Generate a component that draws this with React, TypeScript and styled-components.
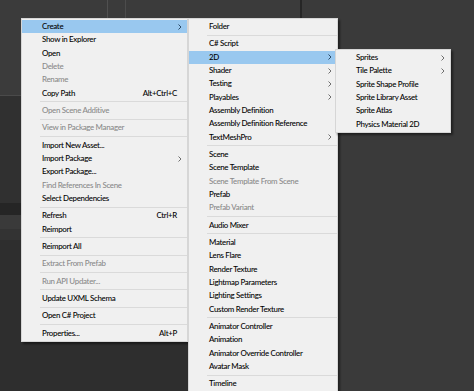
import React from 'react';
import styled, { createGlobalStyle } from 'styled-components';

const GlobalStyle = createGlobalStyle`
  html, body {
    margin: 0;
    padding: 0;
    background: #2f2f2f;
  }
  body {
    font-family: Lato, "Noto Sans", sans-serif;
  }
`;

const ROW = 13.333;

const Stage = styled.div`
  position: relative;
  width: 474px;
  height: 391px;
  overflow: hidden;
  background: #2f2f2f;
`;

// editor panels behind the context menu
const Backdrop = styled.div`
  display: grid;
  grid-template-columns: 300px 1fr;
  height: 100%;
`;

const LeftPane = styled.div`
  display: flex;
  flex-direction: column;
`;

const SceneStrip = styled.div`
  height: 95px;
  background-color: #3b3b3b;
  background-image:
    linear-gradient(to right, transparent 107px, #505050 107px, #505050 108px, transparent 108px),
    linear-gradient(to right, transparent 125px, #4c4c4c 125px, #4c4c4c 126px, transparent 126px);
  border-bottom: 1px solid #4a4a4a;
`;

const Band = styled.div<{ $h: number; $bg: string }>`
  height: ${p => p.$h}px;
  background: ${p => p.$bg};
`;

const Fill = styled.div`
  flex: 1;
  background: #2e2e2e;
`;

const RightPane = styled.div`
  background: #3a3a3a;
  border-left: 2px solid #262626;
`;

const Menu = styled.div<{ $x: number; $y: number; $w: number }>`
  position: absolute;
  left: ${p => p.$x}px;
  top: ${p => p.$y}px;
  width: ${p => p.$w}px;
  box-sizing: border-box;
  padding: 1px 0 1px;
  background: #f0f0f0;
  border: 1px solid #d6d6d6;
  box-shadow: 2px 2px 2px rgba(0, 0, 0, 0.45);
`;

const Row = styled.div<{ $active?: boolean; $disabled?: boolean }>`
  display: flex;
  align-items: center;
  height: ${ROW}px;
  padding: 0 5px 0 20px;
  font-size: 7.9px;
  font-weight: 500;
  letter-spacing: -0.3px;
  line-height: ${ROW}px;
  white-space: nowrap;
  color: ${p => (p.$disabled ? '#8a8a8a' : '#000000')};
  background: ${p => (p.$active ? '#99c8ef' : 'transparent')};
`;

const Label = styled.span`
  flex: 1;
`;

const Shortcut = styled.span`
  margin-right: 5px;
`;

const Arrow = styled.svg<{ $active?: boolean }>`
  width: 4px;
  height: 6px;
  margin-left: auto;
  stroke: ${p => (p.$active ? '#2b4a66' : '#6e6e6e')};
  fill: none;
  stroke-width: 1;
`;

const Separator = styled.div`
  height: 4px;
  margin-left: 18px;
  display: flex;
  align-items: center;
  &::after {
    content: '';
    flex: 1;
    height: 1px;
    background: #dadada;
  }
`;

type Item =
  | 'sep'
  | { label: string; shortcut?: string; sub?: boolean; disabled?: boolean; active?: boolean };

const assetMenu: Item[] = [
  { label: 'Create', sub: true, active: true },
  { label: 'Show in Explorer' },
  { label: 'Open' },
  { label: 'Delete', disabled: true },
  { label: 'Rename', disabled: true },
  { label: 'Copy Path', shortcut: 'Alt+Ctrl+C' },
  'sep',
  { label: 'Open Scene Additive', disabled: true },
  'sep',
  { label: 'View in Package Manager', disabled: true },
  'sep',
  { label: 'Import New Asset...' },
  { label: 'Import Package', sub: true },
  { label: 'Export Package...' },
  { label: 'Find References In Scene', disabled: true },
  { label: 'Select Dependencies' },
  'sep',
  { label: 'Refresh', shortcut: 'Ctrl+R' },
  { label: 'Reimport' },
  'sep',
  { label: 'Reimport All' },
  'sep',
  { label: 'Extract From Prefab', disabled: true },
  'sep',
  { label: 'Run API Updater...', disabled: true },
  'sep',
  { label: 'Update UXML Schema' },
  'sep',
  { label: 'Open C# Project' },
  'sep',
  { label: 'Properties...', shortcut: 'Alt+P' },
];

const createMenu: Item[] = [
  { label: 'Folder' },
  'sep',
  { label: 'C# Script' },
  { label: '2D', sub: true, active: true },
  { label: 'Shader', sub: true },
  { label: 'Testing', sub: true },
  { label: 'Playables', sub: true },
  { label: 'Assembly Definition' },
  { label: 'Assembly Definition Reference' },
  { label: 'TextMeshPro', sub: true },
  'sep',
  { label: 'Scene' },
  { label: 'Scene Template' },
  { label: 'Scene Template From Scene', disabled: true },
  { label: 'Prefab' },
  { label: 'Prefab Variant', disabled: true },
  'sep',
  { label: 'Audio Mixer' },
  'sep',
  { label: 'Material' },
  { label: 'Lens Flare' },
  { label: 'Render Texture' },
  { label: 'Lightmap Parameters' },
  { label: 'Lighting Settings' },
  { label: 'Custom Render Texture' },
  'sep',
  { label: 'Animator Controller' },
  { label: 'Animation' },
  { label: 'Animator Override Controller' },
  { label: 'Avatar Mask' },
  'sep',
  { label: 'Timeline' },
];

const twoDMenu: Item[] = [
  { label: 'Sprites', sub: true },
  { label: 'Tile Palette', sub: true },
  { label: 'Sprite Shape Profile' },
  { label: 'Sprite Library Asset' },
  { label: 'Sprite Atlas' },
  { label: 'Physics Material 2D' },
];

const MenuList: React.FC<{ items: Item[]; x: number; y: number; w: number }> = ({ items, x, y, w }) => (
  <Menu $x={x} $y={y} $w={w}>
    {items.map((item, i) =>
      item === 'sep' ? (
        <Separator key={i} />
      ) : (
        <Row key={i} $active={item.active} $disabled={item.disabled}>
          <Label>{item.label}</Label>
          {item.shortcut && <Shortcut>{item.shortcut}</Shortcut>}
          {item.sub && (
            <Arrow $active={item.active} viewBox="0 0 4 6">
              <polyline points="0.5,0.5 3,3 0.5,5.5" />
            </Arrow>
          )}
        </Row>
      )
    )}
  </Menu>
);

const App: React.FC = () => {
  return (
    <>
      <GlobalStyle />
      <Stage>
        <Backdrop>
          <LeftPane>
            <SceneStrip />
            <Band $h={107} $bg="#303030" />
            <Band $h={12} $bg="#252525" />
            <Band $h={14} $bg="#3a3a3a" />
            <Band $h={11} $bg="#333333" />
            <Fill />
          </LeftPane>
          <RightPane />
        </Backdrop>
        <MenuList items={assetMenu} x={21} y={18} w={167} />
        <MenuList items={createMenu} x={188} y={18} w={150} />
        <MenuList items={twoDMenu} x={335} y={49} w={116} />
      </Stage>
    </>
  );
};

export default App;
